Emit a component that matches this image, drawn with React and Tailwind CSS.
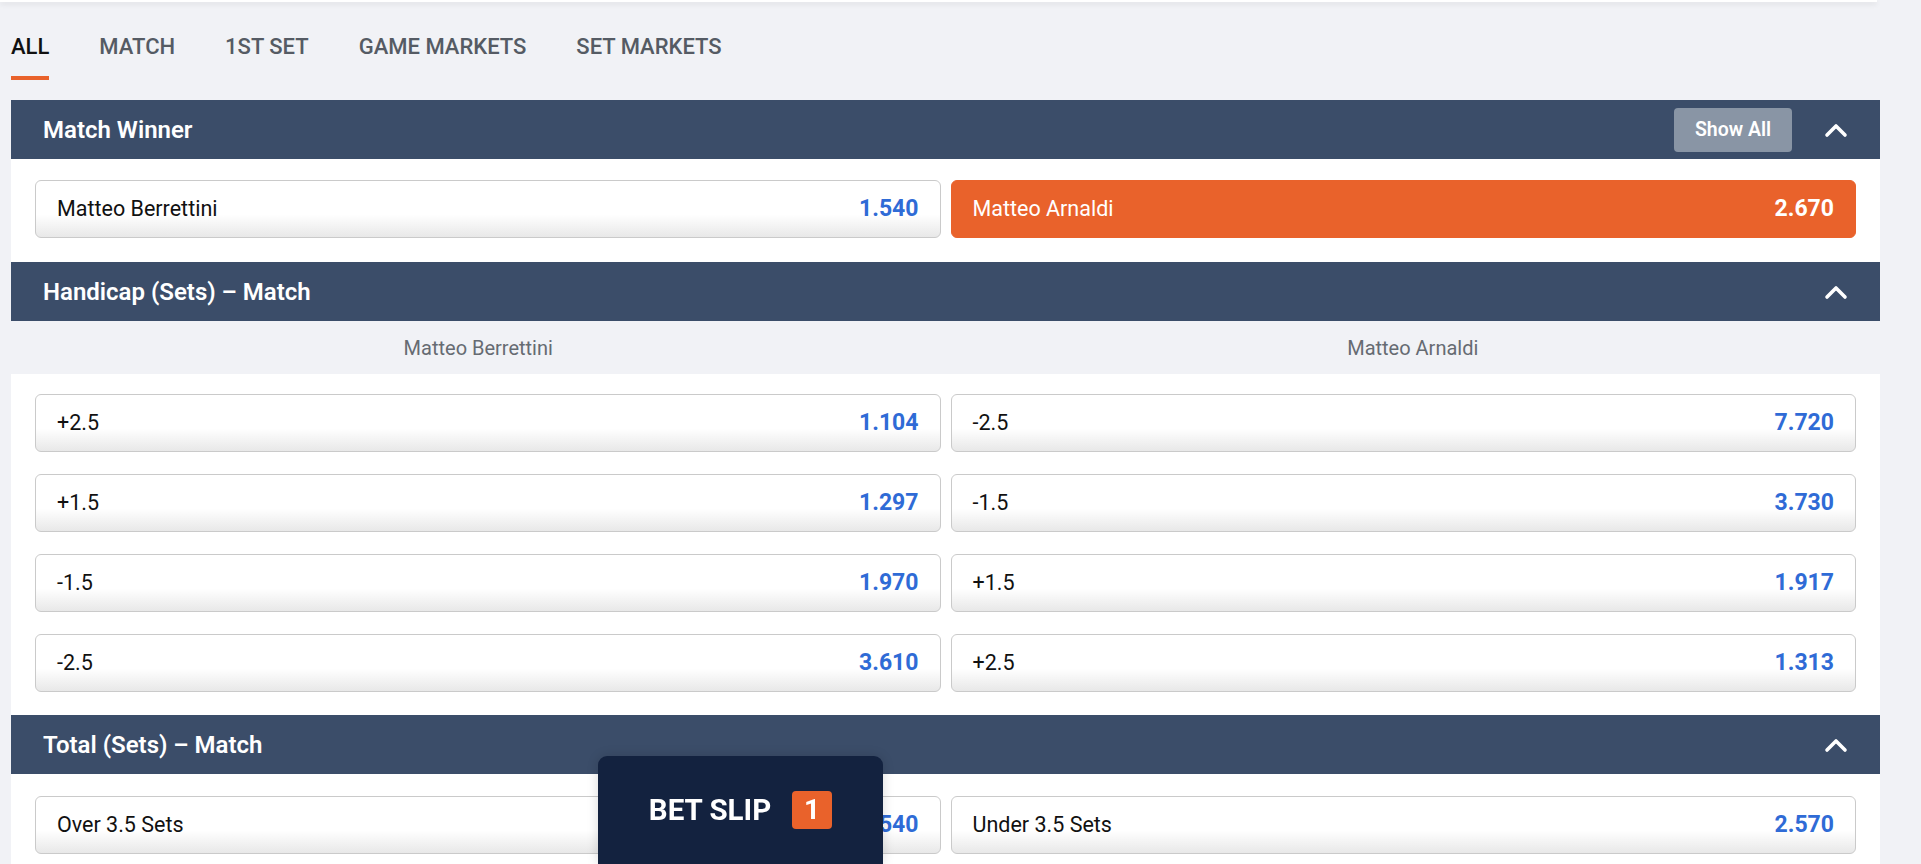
import React, { useState } from 'react';

const tabs = ['ALL', 'MATCH', '1ST SET', 'GAME MARKETS', 'SET MARKETS'];

const handicap = [
  [{ label: '+2.5', odds: '1.104' }, { label: '-2.5', odds: '7.720' }],
  [{ label: '+1.5', odds: '1.297' }, { label: '-1.5', odds: '3.730' }],
  [{ label: '-1.5', odds: '1.970' }, { label: '+1.5', odds: '1.917' }],
  [{ label: '-2.5', odds: '3.610' }, { label: '+2.5', odds: '1.313' }],
];

const Chevron = () => (
  <svg width="24" height="16" viewBox="0 0 24 16" fill="none">
    <polyline points="3,13 12,4 21,13" stroke="white" strokeWidth="3.6" strokeLinecap="round" strokeLinejoin="round" />
  </svg>
);

const OddsButton = ({ label, odds, selected }) => (
  <button
    className={
      selected
        ? 'h-[58px] flex items-center justify-between px-[21px] rounded-[6px] border border-[#e9622b] bg-[#e9622b] text-white'
        : 'h-[58px] flex items-center justify-between px-[21px] rounded-[6px] border border-[#cacaca] bg-linear-to-b from-white from-60% to-[#e8e8e8] text-[#111]'
    }
  >
    <span className="text-[21.5px]">{label}</span>
    <span className={selected ? 'text-[23px] font-bold text-white' : 'text-[23px] font-bold text-[#2f6bd6]'}>{odds}</span>
  </button>
);

const SectionHeader = ({ title, showAll }) => (
  <div className="h-[59px] bg-[#3b4d69] flex items-center justify-between px-[32px]">
    <h3 className="text-[24px] font-semibold text-white">{title}</h3>
    <div className="flex items-center gap-[32px]">
      {showAll && (
        <button className="h-[44px] w-[118px] rounded-[4px] bg-[#8995a5] text-white text-[19.5px] font-semibold">Show All</button>
      )}
      <Chevron />
    </div>
  </div>
);

export default function App() {
  const [active, setActive] = useState(0);

  return (
    <div className="min-h-screen bg-[#f1f2f6] font-[Roboto,sans-serif] overflow-hidden">
      <div className="pl-[11px] pr-[41px]">
        <div className="h-[2px] -ml-[11px] mr-[3px] bg-white shadow-[0_2px_5px_rgba(0,0,0,0.12)]" />

        {/* tabs */}
        <div className="flex gap-[50px]">
          {tabs.map((t, i) => (
            <button key={t} onClick={() => setActive(i)} className="flex flex-col pt-[33px]">
              <span className={i === active ? 'text-[22px] leading-6 font-medium text-[#111]' : 'text-[22px] leading-6 font-medium text-[#555b64]'}>{t}</span>
              <span className={i === active ? 'mt-[17px] h-[4px] bg-[#e9622b]' : 'mt-[17px] h-[4px]'} />
            </button>
          ))}
        </div>

        <div className="mt-[20px]">
          <SectionHeader title="Match Winner" showAll />
          <div className="bg-white grid grid-cols-2 gap-x-[10px] px-[24px] pt-[21px] pb-[24px]">
            <OddsButton label="Matteo Berrettini" odds="1.540" />
            <OddsButton label="Matteo Arnaldi" odds="2.670" selected />
          </div>

          <SectionHeader title="Handicap (Sets) – Match" />
          <div className="h-[53px] grid grid-cols-2 items-center text-center text-[20px] text-[#666b72]">
            <span>Matteo Berrettini</span>
            <span>Matteo Arnaldi</span>
          </div>
          <div className="bg-white grid grid-cols-2 gap-x-[10px] gap-y-[22px] px-[24px] pt-[20px] pb-[23px]">
            {handicap.map((row, r) => (
              <React.Fragment key={r}>
                <OddsButton {...row[0]} />
                <OddsButton {...row[1]} />
              </React.Fragment>
            ))}
          </div>

          <SectionHeader title="Total (Sets) – Match" />
          <div className="bg-white grid grid-cols-2 gap-x-[10px] px-[24px] pt-[22px] pb-[22px]">
            <OddsButton label="Over 3.5 Sets" odds="1.540" />
            <OddsButton label="Under 3.5 Sets" odds="2.570" />
          </div>
        </div>
      </div>

      {/* bet slip tab */}
      <div className="fixed bottom-0 left-[598px] w-[285px] h-[108px] rounded-t-[9px] bg-[#13223f] shadow-[0_0_12px_rgba(0,0,0,0.15)]">
        <div className="flex items-center justify-center gap-[21px] pt-[32px]">
          <span className="text-[29.5px] font-bold text-white">BET SLIP</span>
          <span className="w-[40px] h-[38px] rounded-[4px] bg-[#e9622b] flex items-center justify-center text-[28px] font-bold text-white">1</span>
        </div>
      </div>
    </div>
  );
}
